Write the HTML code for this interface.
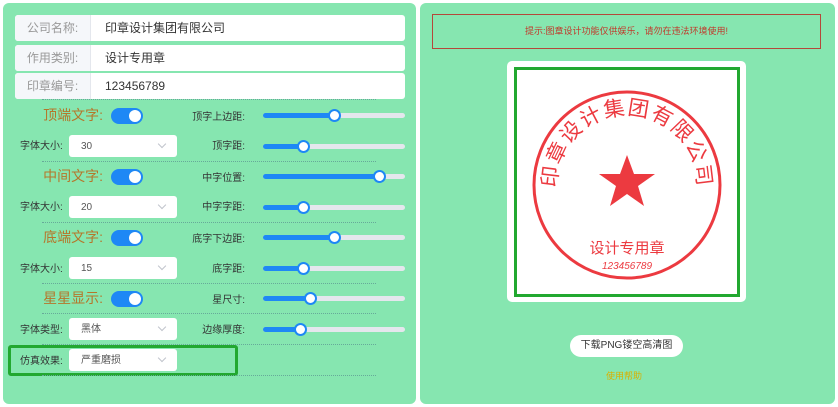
<!DOCTYPE html>
<html><head><meta charset="utf-8"><style>
*{margin:0;padding:0;box-sizing:border-box}
body{width:838px;height:407px;background:#fff;position:relative;font-family:"Liberation Sans","Noto Sans CJK SC",sans-serif;overflow:hidden}
.panel{position:absolute;background:#86e6b0;border-radius:6px}
.a{position:absolute}
.inp{position:absolute;left:15px;width:390px;height:26px;background:#fff;border-radius:3px;font-size:12px;color:#333}
.inp .l{position:absolute;left:0;top:0;width:76px;height:26px;background:#f5f7fa;color:#999;border-right:1px solid #e4e7ed;text-align:center;line-height:26px;border-radius:3px 0 0 3px}
.inp .v{position:absolute;left:90px;line-height:26px}
.big{position:absolute;font-size:14px;line-height:16px;color:#b5762a;width:103px;text-align:right}
.tg{position:absolute;left:111px;width:32px;height:16px;background:#1e88f5;border-radius:8px}
.tg:after{content:"";position:absolute;right:2px;top:2px;width:12px;height:12px;border-radius:50%;background:#fff}
.sm{position:absolute;font-size:10px;line-height:12px;color:#333;margin-top:2px}
.rl{position:absolute;font-size:10px;line-height:12px;color:#333;width:245px;text-align:right;left:0;margin-top:2px}
.sel{position:absolute;left:69px;width:108px;height:22px;background:#fff;border-radius:3px;font-size:10px;color:#555;line-height:22px;padding-left:12px}
.sel span{position:relative;top:1px}
.sel:after{content:"";position:absolute;right:12px;top:6px;width:5px;height:5px;border-right:1px solid #c0c4cc;border-bottom:1px solid #c0c4cc;transform:rotate(45deg)}
.tr{position:absolute;left:263px;width:142px;height:5px;background:#e4e7ed;border-radius:3px}
.tr i{position:absolute;left:0;top:0;height:5px;background:#1e88f5;border-radius:3px}
.tr b{position:absolute;top:-4px;width:13px;height:13px;border-radius:50%;background:#fff;border:2px solid #1e88f5;margin-left:-6px}
.dash{position:absolute;left:42px;width:334px;border-top:1px dotted #6a9;}
</style></head><body>
<div class="panel" style="left:3px;top:3px;width:413px;height:401px"></div>
<div class="panel" style="left:420px;top:3px;width:415px;height:401px"></div>

<div class="inp" style="top:15px"><div class="l">公司名称:</div><div class="v">印章设计集团有限公司</div></div>
<div class="inp" style="top:45px"><div class="l">作用类别:</div><div class="v">设计专用章</div></div>
<div class="inp" style="top:73px"><div class="l">印章编号:</div><div class="v">123456789</div></div>

<div class="dash" style="top:99px"></div>
<div class="big" style="top:107px">顶端文字:</div><div class="tg" style="top:108px"></div>
<div class="rl" style="top:110px">顶字上边距:</div>
<div class="tr" style="top:113px"><i style="width:71px"></i><b style="left:71px"></b></div>
<div class="sm" style="left:20px;top:139px">字体大小:</div><div class="sel" style="top:135px"><span>30</span></div>
<div class="rl" style="top:139px">顶字距:</div>
<div class="tr" style="top:144px"><i style="width:40px"></i><b style="left:40px"></b></div>

<div class="dash" style="top:161px"></div>
<div class="big" style="top:168px">中间文字:</div><div class="tg" style="top:169px"></div>
<div class="rl" style="top:171px">中字位置:</div>
<div class="tr" style="top:174px"><i style="width:116px"></i><b style="left:116px"></b></div>
<div class="sm" style="left:20px;top:200px">字体大小:</div><div class="sel" style="top:196px"><span>20</span></div>
<div class="rl" style="top:200px">中字字距:</div>
<div class="tr" style="top:205px"><i style="width:40px"></i><b style="left:40px"></b></div>

<div class="dash" style="top:222px"></div>
<div class="big" style="top:229px">底端文字:</div><div class="tg" style="top:230px"></div>
<div class="rl" style="top:232px">底字下边距:</div>
<div class="tr" style="top:235px"><i style="width:71px"></i><b style="left:71px"></b></div>
<div class="sm" style="left:20px;top:262px">字体大小:</div><div class="sel" style="top:257px"><span>15</span></div>
<div class="rl" style="top:262px">底字距:</div>
<div class="tr" style="top:266px"><i style="width:40px"></i><b style="left:40px"></b></div>

<div class="dash" style="top:283px"></div>
<div class="big" style="top:290px">星星显示:</div><div class="tg" style="top:291px"></div>
<div class="rl" style="top:293px">星尺寸:</div>
<div class="tr" style="top:296px"><i style="width:47px"></i><b style="left:47px"></b></div>
<div class="dash" style="top:313px"></div>
<div class="sm" style="left:20px;top:323px">字体类型:</div><div class="sel" style="top:318px"><span>黑体</span></div>
<div class="rl" style="top:323px">边缘厚度:</div>
<div class="tr" style="top:327px"><i style="width:37px"></i><b style="left:37px"></b></div>
<div class="dash" style="top:344px"></div>
<div class="a" style="left:8px;top:345px;width:230px;height:31px;border:3px solid #22a830;border-radius:3px"></div>
<div class="sm" style="left:20px;top:354px">仿真效果:</div><div class="sel" style="top:349px"><span>严重磨损</span></div>
<div class="dash" style="top:375px"></div>

<div class="a" style="left:432px;top:14px;width:389px;height:35px;border:1px solid #b5473a;font-size:9px;color:#c0392b;text-align:center;line-height:33px">提示:图章设计功能仅供娱乐，请勿在违法环境使用!</div>
<div class="a" style="left:507px;top:61px;width:239px;height:241px;background:#fff;border-radius:5px"></div>
<div class="a" style="left:514px;top:67px;width:226px;height:230px;border:3px solid #22a830"></div>
<svg class="a" style="left:507px;top:61px" width="239" height="241" viewBox="0 0 239 241">
<defs><path id="arc" d="M 52.4 142.1 A 70 70 0 1 1 187.6 142.1"/></defs>
<circle cx="120" cy="124" r="93" fill="none" stroke="#ec3a40" stroke-width="3"/>
<text font-size="21" fill="#ec3a40" font-family="Noto Sans CJK SC,sans-serif" letter-spacing="1.5"><textPath href="#arc" startOffset="50%" text-anchor="middle">印章设计集团有限公司</textPath></text>
<polygon fill="#ec3a40" points="120,94 127,113 148,113 131,125 137,145 120,133 103,145 109,125 92,113 113,113"/>
<text x="120" y="192" font-size="15" fill="#ec3a40" text-anchor="middle" font-family="Noto Sans CJK SC,sans-serif">设计专用章</text>
<text x="120" y="208" font-size="10" fill="#ec3a40" text-anchor="middle" font-style="italic">123456789</text>
</svg>
<div class="a" style="left:570px;top:335px;width:113px;height:22px;background:#fff;border-radius:11px;font-size:10px;color:#333;text-align:center;line-height:22px">下载PNG镂空高清图</div>
<div class="a" style="left:606px;top:369px;font-size:9px;color:#d9b000">使用帮助</div>
</body></html>
